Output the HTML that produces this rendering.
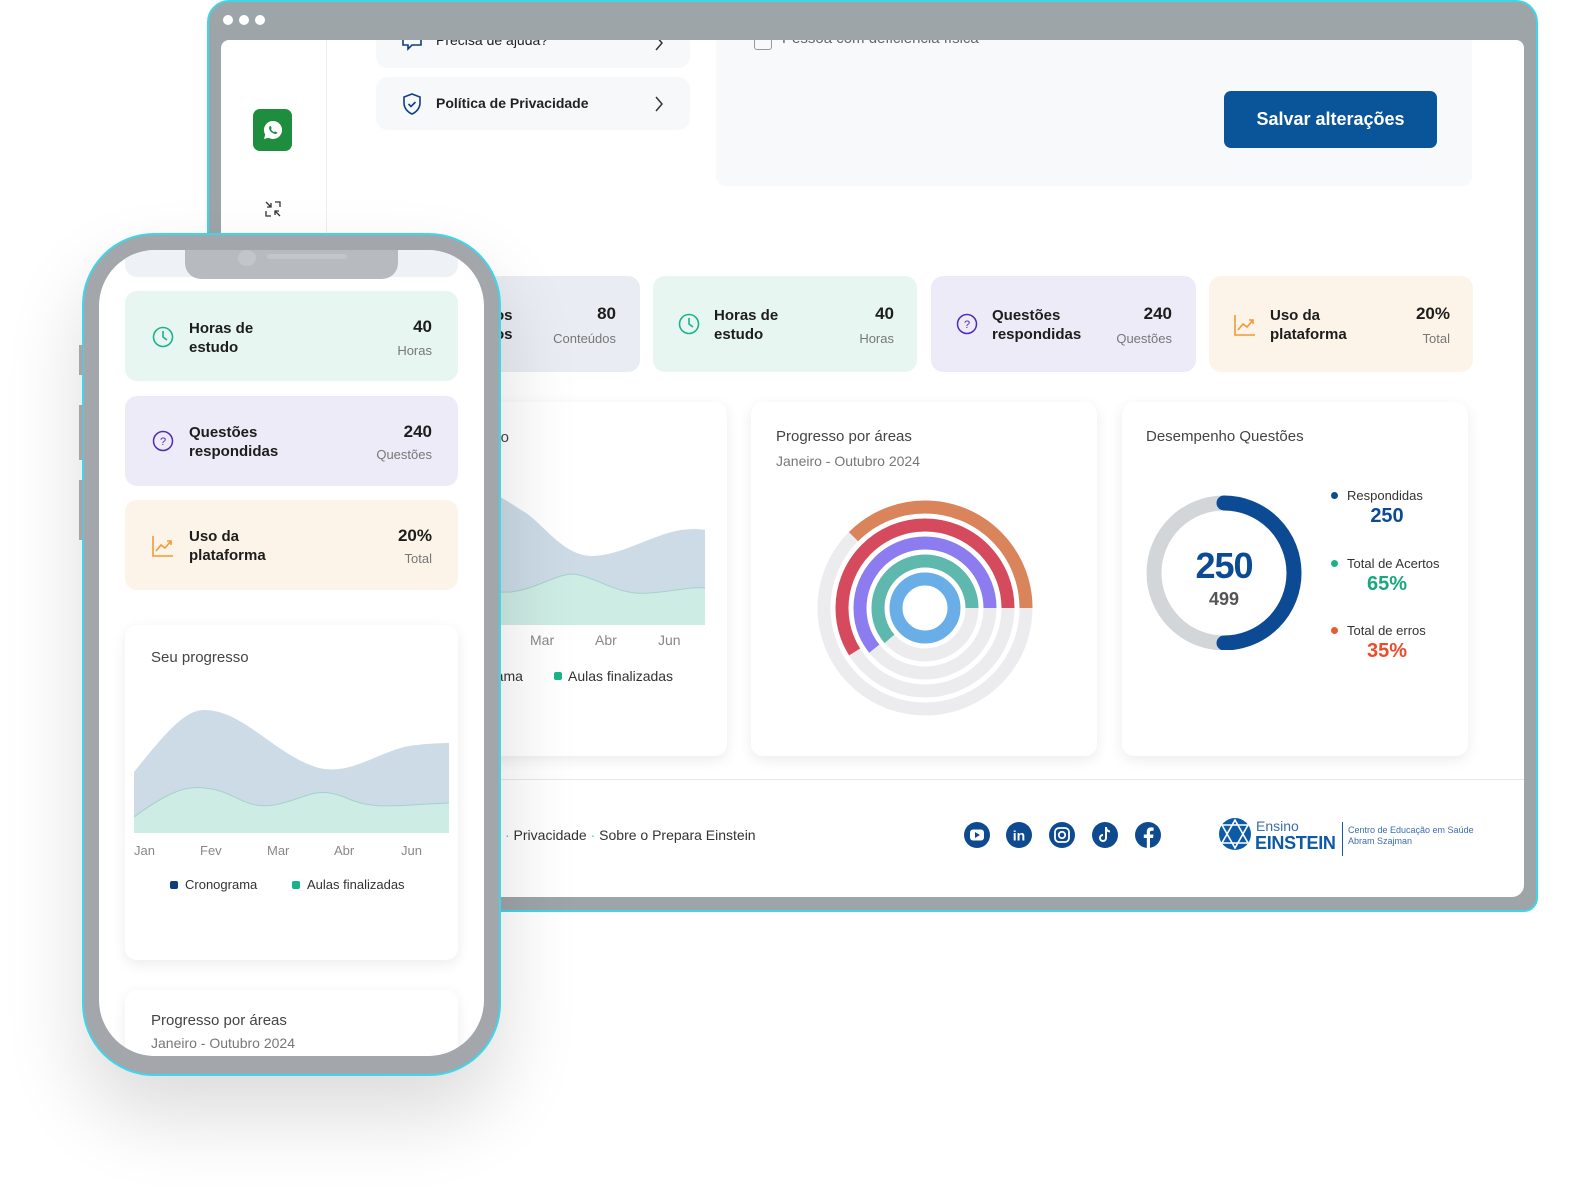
<!DOCTYPE html>
<html><head><meta charset="utf-8"><style>
*{margin:0;padding:0;box-sizing:border-box}
body{width:1576px;height:1202px;background:#fff;position:relative;overflow:hidden;font-family:"Liberation Sans",sans-serif;color:#222}
.a{position:absolute}
.frame{left:207px;top:0;width:1331px;height:912px;background:#9ea5a9;border:2px solid #3fd6ea;border-radius:22px 22px 14px 14px}
.screen{left:221px;top:40px;width:1303px;height:857px;background:#fff;border-radius:8px 8px 12px 12px;overflow:hidden}
.dot{width:10px;height:10px;border-radius:50%;background:#fff;top:15px}
.card{border-radius:12px}
.t{font-size:15px;font-weight:bold;line-height:19px;color:#1d1d1d}
.v{font-size:17px;font-weight:bold;text-align:right;color:#1d1d1d}
.u{font-size:13px;color:#777;text-align:right}
.wc{background:#fff;border-radius:12px;box-shadow:0 4px 14px rgba(0,0,0,.08)}
.g{font-size:14px;color:#888}
</style></head><body>
<div class="a frame"></div>
<div class="a dot" style="left:223px"></div><div class="a dot" style="left:239px"></div><div class="a dot" style="left:255px"></div>
<div class="a screen">
  <div class="a" style="left:105px;top:0;width:1px;height:857px;background:#eceef1"></div>
  <div class="a" style="left:32px;top:69px;width:39px;height:42px;background:#1e8e3e;border-radius:7px"></div>
  <svg class="a" style="left:38px;top:76px" width="28" height="28" viewBox="0 0 28 28"><path d="M14 5a9 9 0 0 0-7.8 13.5L5 23l4.6-1.2A9 9 0 1 0 14 5z" fill="#fff"/><path d="M10.5 10.5c.5-1 1.2-.8 1.5 0l.6 1.4c.1.4-.4.9-.6 1.2.6 1.3 1.700 2.4 3 3 .3-.2.8-.8 1.2-.6l1.4.6c.8.3.9 1-.1 1.600-1.5.9-4-.3-5.6-1.9s-2.3-3.9-1.4-5.3z" fill="#1e8e3e"/></svg>
  <svg class="a" style="left:43px;top:160px" width="18" height="18" viewBox="0 0 18 18" fill="none" stroke="#333" stroke-width="1.3"><path d="M2 2l5 5M7 3v4H3M16 16l-5-5M11 15v-4h4M11 2h5v5M2 11v5h5"/></svg>
  <div class="a card" style="left:155px;top:-22px;width:314px;height:50px;background:#f7f8fa"></div>
  <svg class="a" style="left:180px;top:-10px" width="22" height="24" viewBox="0 0 22 24" fill="none" stroke="#0d3f80" stroke-width="1.6"><path d="M2 3h18v12H11l-4 4v-4H2z"/></svg>
  <div class="a" style="left:215px;top:-8px;font-size:14px">Precisa de ajuda?</div>
  <svg class="a" style="left:432px;top:-6px" width="12" height="18" viewBox="0 0 12 18" fill="none" stroke="#333" stroke-width="1.5"><path d="M3 2l6 7-6 7"/></svg>
  <div class="a card" style="left:155px;top:37px;width:314px;height:53px;background:#f7f8fa"></div>
  <svg class="a" style="left:180px;top:52px" width="22" height="24" viewBox="0 0 22 24" fill="none" stroke="#0d3f80" stroke-width="1.6"><path d="M11 2l8 3v6c0 5-3.5 9-8 11-4.5-2-8-6-8-11V5z"/><path d="M7.5 12l2.5 2.5 4.5-4.5"/></svg>
  <div class="a" style="left:215px;top:55px;font-size:14px;font-weight:bold;color:#222">Política de Privacidade</div>
  <svg class="a" style="left:432px;top:55px" width="12" height="18" viewBox="0 0 12 18" fill="none" stroke="#333" stroke-width="1.5"><path d="M3 2l6 7-6 7"/></svg>
  <div class="a" style="left:495px;top:0;width:756px;height:146px;background:#f8f9fb;border-radius:0 0 10px 10px"></div>
  <div class="a" style="left:533px;top:-6px;width:18px;height:16px;border:1.5px solid #999;border-radius:3px"></div>
  <div class="a" style="left:561px;top:-10px;font-size:15px;color:#666">Pessoa com deficiência física</div>
  <div class="a" style="left:1003px;top:51px;width:213px;height:57px;background:#0a5499;border-radius:7px;color:#fff;font-size:18px;font-weight:bold;text-align:center;line-height:57px">Salvar alterações</div>
  <!-- stat cards -->
  <div class="a card" style="left:150px;top:236px;width:269px;height:96px;background:#e9edf3"></div>
  <div class="a t" style="left:274px;top:266px">os<br>os</div>
  <div class="a v" style="left:300px;top:264px;width:95px">80</div>
  <div class="a u" style="left:300px;top:291px;width:95px">Conteúdos</div>
  <div class="a card" style="left:432px;top:236px;width:264px;height:96px;background:#e8f6f2"></div>
  <svg class="a" style="left:457px;top:273px" width="22" height="22" viewBox="0 0 22 22" fill="none" stroke="#19b38a" stroke-width="1.6"><circle cx="11" cy="11" r="9.5"/><path d="M11 5v6l4 3"/></svg>
  <div class="a t" style="left:493px;top:266px">Horas de<br>estudo</div>
  <div class="a v" style="left:600px;top:264px;width:73px">40</div>
  <div class="a u" style="left:600px;top:291px;width:73px">Horas</div>
  <div class="a card" style="left:710px;top:236px;width:265px;height:96px;background:#eeebf8"></div>
  <svg class="a" style="left:735px;top:273px" width="22" height="22" viewBox="0 0 22 22" fill="none" stroke="#4b2bb8" stroke-width="1.5"><circle cx="11" cy="11" r="9.5"/><text x="11" y="15" font-size="11" text-anchor="middle" fill="#4b2bb8" stroke="none" font-family="Liberation Sans">?</text></svg>
  <div class="a t" style="left:771px;top:266px">Questões<br>respondidas</div>
  <div class="a v" style="left:870px;top:264px;width:81px">240</div>
  <div class="a u" style="left:870px;top:291px;width:81px">Questões</div>
  <div class="a card" style="left:988px;top:236px;width:264px;height:96px;background:#fdf4e9"></div>
  <svg class="a" style="left:1012px;top:273px" width="24" height="24" viewBox="0 0 24 24" fill="none" stroke="#f19a36" stroke-width="1.6"><path d="M2 2v20h20M5 17l5-6 4 3 6-7M16 7h4v4"/></svg>
  <div class="a t" style="left:1049px;top:266px">Uso da<br>plataforma</div>
  <div class="a v" style="left:1150px;top:264px;width:79px">20%</div>
  <div class="a u" style="left:1150px;top:291px;width:79px">Total</div>
  <!-- chart cards -->
  <div class="a wc" style="left:200px;top:362px;width:306px;height:354px"></div>
  <div class="a" style="left:160px;top:389px;width:128px;text-align:right;font-size:15px;color:#444">Seu progresso</div>
  <svg class="a" style="left:200px;top:440px" width="306" height="200">
    <path d="M0 20 C40 -10 70 10 100 30 C120 40 140 75 170 76 C200 76 230 55 260 50 C275 48 284 50 284 50 L284 145 L0 145Z" fill="#ccdbe6"/>
    <path d="M0 110 C40 110 60 113 90 112 C120 108 140 90 158 95 C180 100 200 116 228 113 C250 112 270 106 284 108 L284 145 L0 145Z" fill="#cdece4"/>
    <path d="M0 110 C40 110 60 113 90 112 C120 108 140 90 158 95 C180 100 200 116 228 113 C250 112 270 106 284 108" fill="none" stroke="#a8cfd0" stroke-width="1"/>
  </svg>
  <div class="a g" style="left:309px;top:592px">Mar</div>
  <div class="a g" style="left:374px;top:592px">Abr</div>
  <div class="a g" style="left:437px;top:592px">Jun</div>
  <div class="a" style="left:270px;top:628px;font-size:14px;color:#333">rama</div>
  <div class="a" style="left:333px;top:632px;width:8px;height:8px;background:#19b38a;border-radius:2px"></div>
  <div class="a" style="left:347px;top:628px;font-size:14px;color:#333">Aulas finalizadas</div>

  <div class="a wc" style="left:530px;top:362px;width:346px;height:354px"></div>
  <div class="a" style="left:555px;top:388px;font-size:15px;color:#444">Progresso por áreas</div>
  <div class="a" style="left:555px;top:413px;font-size:14px;color:#777">Janeiro - Outubro 2024</div>
  <svg class="a" style="left:530px;top:362px" width="346" height="354">
    <g transform="translate(174,206) scale(1,-1)" fill="none" stroke-width="13">
      <circle r="101" stroke="#ececef"/><circle r="83" stroke="#ececef"/><circle r="65" stroke="#ececef"/><circle r="47" stroke="#ececef"/>
      <circle r="101" stroke="#d9845a" stroke-dasharray="238 1000"/>
      <circle r="83" stroke="#d64a5e" stroke-dasharray="307 1000"/>
      <circle r="65" stroke="#8c7cf0" stroke-dasharray="248 1000"/>
      <circle r="47" stroke="#5fb8ad" stroke-dasharray="181 1000"/>
      <circle r="29" stroke="#6aaee8"/>
    </g>
  </svg>

  <div class="a wc" style="left:901px;top:362px;width:346px;height:354px"></div>
  <div class="a" style="left:925px;top:388px;font-size:15px;color:#444">Desempenho Questões</div>
  <svg class="a" style="left:920px;top:440px" width="170" height="170">
    <g transform="translate(83,93)" fill="none" stroke-width="15">
      <circle r="70" stroke="#d3d6d9"/>
      <path d="M0 -70 A70 70 0 0 1 0 70" stroke="#0d4a94" stroke-linecap="round"/>
    </g>
  </svg>
  <div class="a" style="left:943px;top:505px;width:120px;text-align:center;font-size:36px;font-weight:bold;color:#0d4a94;letter-spacing:-1px">250</div>
  <div class="a" style="left:943px;top:549px;width:120px;text-align:center;font-size:18px;font-weight:bold;color:#555">499</div>
  <div class="a" style="left:1110px;top:452px;width:7px;height:7px;border-radius:50%;background:#0d4a94"></div>
  <div class="a" style="left:1126px;top:448px;font-size:13px;color:#333">Respondidas</div>
  <div class="a" style="left:1126px;top:465px;width:80px;text-align:center;font-size:20px;font-weight:bold;color:#0d4a94">250</div>
  <div class="a" style="left:1110px;top:520px;width:7px;height:7px;border-radius:50%;background:#1ab386"></div>
  <div class="a" style="left:1126px;top:516px;font-size:13px;color:#333">Total de Acertos</div>
  <div class="a" style="left:1126px;top:533px;width:80px;text-align:center;font-size:20px;font-weight:bold;color:#1aa880">65%</div>
  <div class="a" style="left:1110px;top:587px;width:7px;height:7px;border-radius:50%;background:#ee5a30"></div>
  <div class="a" style="left:1126px;top:583px;font-size:13px;color:#333">Total de erros</div>
  <div class="a" style="left:1126px;top:600px;width:80px;text-align:center;font-size:20px;font-weight:bold;color:#ee4b2b">35%</div>
  <!-- footer -->
  <div class="a" style="left:106px;top:739px;width:1197px;height:1px;background:#e6e8eb"></div>
  <div class="a" style="left:284px;top:787px;font-size:14px;color:#333"><span style="color:#3fc3d8">·</span> Privacidade <span style="color:#3fc3d8">·</span> Sobre o Prepara Einstein</div>
  <svg class="a" style="left:742px;top:781px" width="200" height="30">
    <g fill="#0d4a8f"><circle cx="14" cy="14" r="13"/><circle cx="56" cy="14" r="13"/><circle cx="99" cy="14" r="13"/><circle cx="142" cy="14" r="13"/><circle cx="185" cy="14" r="13"/></g>
    <rect x="7" y="8.5" width="14" height="11" rx="3" fill="#fff"/><path d="M12 11v6l5-3z" fill="#0d4a8f"/>
    <text x="56" y="19.5" font-size="14" font-weight="bold" fill="#fff" text-anchor="middle" font-family="Liberation Sans">in</text>
    <rect x="92" y="7" width="14" height="14" rx="4" fill="none" stroke="#fff" stroke-width="1.8"/><circle cx="99" cy="14" r="3.2" fill="none" stroke="#fff" stroke-width="1.8"/>
    <path d="M143 6v11a3 3 0 1 1-3-3M143 6c0 3 2 4.5 4 4.5" fill="none" stroke="#fff" stroke-width="2"/>
    <path d="M187 27v-10h3l.5-3.5H187v-2c0-1 .4-1.7 1.8-1.7h1.8V6.6c-.5 0-1.5-.2-2.6-.2-2.6 0-4.2 1.5-4.2 4.3v2.8h-3V17h3v10z" fill="#fff"/>
  </svg>
  <svg class="a" style="left:996px;top:776px" width="36" height="36" viewBox="0 0 36 36"><circle cx="18" cy="18" r="16" fill="#0d5aa7"/><path d="M18 4l13 23H5z M18 32L5 9h26z" fill="none" stroke="#fff" stroke-width="1.6"/></svg>
  <div class="a" style="left:1035px;top:778px;font-size:14px;color:#3a6eb0">Ensino</div>
  <div class="a" style="left:1034px;top:793px;font-size:18px;font-weight:bold;color:#0d5aa7;letter-spacing:-0.3px">EINSTEIN</div>
  <div class="a" style="left:1121px;top:782px;width:1px;height:34px;background:#0d5aa7"></div>
  <div class="a" style="left:1127px;top:785px;font-size:9px;color:#3a6eb0;line-height:11px">Centro de Educação em Saúde<br>Abram Szajman</div>
</div>

<!-- phone -->
<div class="a" style="left:82px;top:233px;width:419px;height:843px;border-radius:72px;background:#a3a6ab;border:2px solid #3fd6ea;box-shadow:0 40px 80px rgba(0,0,0,.14)"></div>
<div class="a" style="left:79px;top:345px;width:4px;height:30px;background:#a3a6ab"></div>
<div class="a" style="left:79px;top:405px;width:4px;height:55px;background:#a3a6ab"></div>
<div class="a" style="left:79px;top:480px;width:4px;height:60px;background:#a3a6ab"></div>
<div class="a" style="left:99px;top:250px;width:385px;height:806px;border-radius:56px;background:#fff;overflow:hidden">
  <div class="a card" style="left:26px;top:-10px;width:333px;height:37px;background:#eef1f6"></div>
  <div class="a" style="left:86px;top:0;width:213px;height:29px;background:#b7babf;border-radius:0 0 16px 16px"></div>
  <div class="a" style="left:139px;top:0;width:18px;height:16px;border-radius:50%;background:#c2c5c9"></div>
  <div class="a" style="left:168px;top:4px;width:80px;height:5px;border-radius:3px;background:#c2c5c9"></div>
  <div class="a card" style="left:26px;top:41px;width:333px;height:90px;background:#e8f6f2"></div>
  <svg class="a" style="left:53px;top:76px" width="22" height="22" viewBox="0 0 22 22" fill="none" stroke="#19b38a" stroke-width="1.6"><circle cx="11" cy="11" r="9.5"/><path d="M11 5v6l4 3"/></svg>
  <div class="a t" style="left:90px;top:69px">Horas de<br>estudo</div>
  <div class="a v" style="left:250px;top:67px;width:83px">40</div>
  <div class="a u" style="left:250px;top:93px;width:83px">Horas</div>
  <div class="a card" style="left:26px;top:146px;width:333px;height:90px;background:#eeebf8"></div>
  <svg class="a" style="left:53px;top:180px" width="22" height="22" viewBox="0 0 22 22" fill="none" stroke="#4b2bb8" stroke-width="1.5"><circle cx="11" cy="11" r="9.5"/><text x="11" y="15" font-size="11" text-anchor="middle" fill="#4b2bb8" stroke="none" font-family="Liberation Sans">?</text></svg>
  <div class="a t" style="left:90px;top:173px">Questões<br>respondidas</div>
  <div class="a v" style="left:250px;top:172px;width:83px">240</div>
  <div class="a u" style="left:250px;top:197px;width:83px">Questões</div>
  <div class="a card" style="left:26px;top:250px;width:333px;height:90px;background:#fdf4e9"></div>
  <svg class="a" style="left:52px;top:284px" width="24" height="24" viewBox="0 0 24 24" fill="none" stroke="#f19a36" stroke-width="1.6"><path d="M2 2v20h20M5 17l5-6 4 3 6-7M16 7h4v4"/></svg>
  <div class="a t" style="left:90px;top:277px">Uso da<br>plataforma</div>
  <div class="a v" style="left:250px;top:276px;width:83px">20%</div>
  <div class="a u" style="left:250px;top:301px;width:83px">Total</div>
  <div class="a wc" style="left:26px;top:375px;width:333px;height:335px"></div>
  <div class="a" style="left:52px;top:399px;font-size:15px;color:#444">Seu progresso</div>
  <svg class="a" style="left:35px;top:455px" width="316" height="130">
    <path d="M0 67 C30 30 50 5 70 5 C110 5 140 50 185 63 C215 70 240 50 270 42 C290 38 315 38 315 38 L315 128 L0 128Z" fill="#ccdbe6"/>
    <path d="M0 112 C30 90 50 80 70 83 C100 85 110 105 140 100 C170 95 180 80 210 92 C240 106 260 100 315 98 L315 128 L0 128Z" fill="#cdece4"/>
    <path d="M0 112 C30 90 50 80 70 83 C100 85 110 105 140 100 C170 95 180 80 210 92 C240 106 260 100 315 98" fill="none" stroke="#a8cfd0" stroke-width="1"/>
  </svg>
  <div class="a g" style="left:35px;top:593px;font-size:13px">Jan</div>
  <div class="a g" style="left:101px;top:593px;font-size:13px">Fev</div>
  <div class="a g" style="left:168px;top:593px;font-size:13px">Mar</div>
  <div class="a g" style="left:235px;top:593px;font-size:13px">Abr</div>
  <div class="a g" style="left:302px;top:593px;font-size:13px">Jun</div>
  <div class="a" style="left:71px;top:631px;width:8px;height:8px;background:#0d3f80;border-radius:2px"></div>
  <div class="a" style="left:86px;top:627px;font-size:13px;color:#333">Cronograma</div>
  <div class="a" style="left:193px;top:631px;width:8px;height:8px;background:#19b38a;border-radius:2px"></div>
  <div class="a" style="left:208px;top:627px;font-size:13px;color:#333">Aulas finalizadas</div>
  <div class="a wc" style="left:26px;top:740px;width:333px;height:120px"></div>
  <div class="a" style="left:52px;top:762px;font-size:15px;color:#444">Progresso por áreas</div>
  <div class="a" style="left:52px;top:785px;font-size:14px;color:#777">Janeiro - Outubro 2024</div>
</div>
</body></html>
